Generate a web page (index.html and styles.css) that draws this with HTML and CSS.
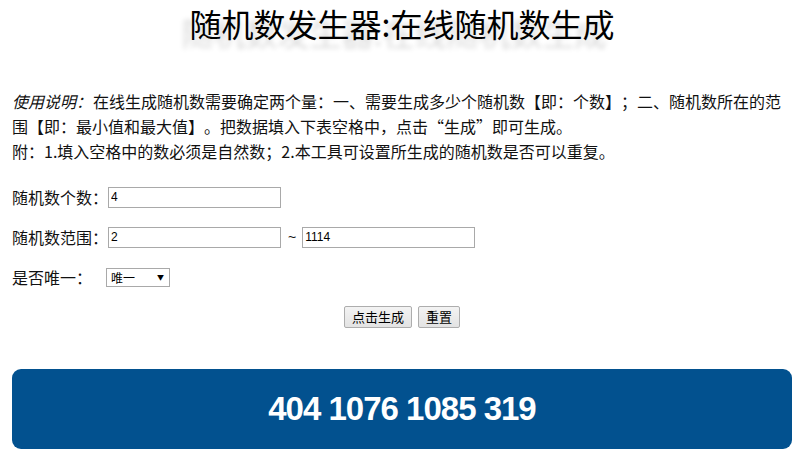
FILE: index.html
```html
<!DOCTYPE html>
<html lang="zh-CN">
<head>
<meta charset="utf-8">
<title>随机数发生器:在线随机数生成</title>
<link rel="stylesheet" href="styles.css">
</head>
<body>
<div class="page">
  <h1 class="title">随机数发生器:在线随机数生成</h1>
  <p class="intro"><em>使用说明：</em>在线生成随机数需要确定两个量：一、需要生成多少个随机数【即：个数】；二、随机数所在的范围【即：最小值和最大值】。把数据填入下表空格中，点击“生成”即可生成。<br>附：1.填入空格中的数必须是自然数；2.本工具可设置所生成的随机数是否可以重复。</p>
  <div class="row"><span class="label">随机数个数：</span><input class="field" type="text" value="4"></div>
  <div class="row"><span class="label">随机数范围：</span><input class="field" type="text" value="2"><span class="tilde">~</span><input class="field" type="text" value="1114"></div>
  <div class="row"><span class="label">是否唯一：</span><span class="select-wrap"><select class="choice"><option>唯一</option><option>不唯一</option></select><span class="arrow">▼</span></span></div>
  <div class="row actions"><button class="btn">点击生成</button><button class="btn">重置</button></div>
  <div class="result">404 1076 1085 319</div>
</div>
</body>
</html>
```
FILE: styles.css
```css
html, body {
  margin: 0;
  padding: 0;
  background: #fff;
}
body {
  font-family: "Noto Sans CJK SC", "Noto Sans", sans-serif;
  font-size: 16px;
  color: #111;
  text-spacing-trim: space-all;
}
.page {
  padding: 0 16px 0 12px;
}
.title {
  margin: 0;
  font-size: 32px;
  font-weight: normal;
  line-height: 46px;
  text-align: center;
  color: #000;
  text-shadow: -8px 9px 5px rgba(0, 0, 0, 0.15);
}
.intro {
  margin: 43px 0 0 0;
  line-height: 25px;
}
.intro em {
  font-style: italic;
  padding-right: 1px;
}
.row {
  height: 40px;
  display: flex;
  align-items: center;
}
.intro + .row {
  margin-top: 13px;
}
.label {
  white-space: nowrap;
}
.field {
  box-sizing: border-box;
  width: 173px;
  height: 21px;
  margin: 0;
  padding: 1px 2px;
  border: 1px solid #a9a9a9;
  font-family: "Liberation Sans", Arial, sans-serif;
  font-size: 12px;
  color: #000;
  outline: none;
}
.tilde {
  font-family: "Liberation Sans", Arial, sans-serif;
  font-size: 14px;
  margin: 0 6px 0 7px;
}
.select-wrap {
  position: relative;
  display: inline-flex;
  margin-left: 14px;
}
.choice {
  box-sizing: border-box;
  width: 64px;
  height: 19px;
  padding: 0 0 0 4px;
  border: 1px solid #a9a9a9;
  border-radius: 0;
  background: #fff;
  font-family: "Noto Sans CJK SC", sans-serif;
  font-size: 12px;
  color: #000;
  appearance: none;
  -webkit-appearance: none;
}
.arrow {
  position: absolute;
  right: 6px;
  top: 4px;
  font-size: 7px;
  line-height: 10px;
  color: #000;
  pointer-events: none;
}
.actions {
  justify-content: center;
  gap: 6px;
}
.btn {
  box-sizing: border-box;
  height: 22px;
  padding: 0 7px;
  border: 1px solid #adadad;
  border-radius: 2px;
  background: linear-gradient(#f3f3f3, #e3e3e3);
  font-family: "Noto Sans CJK SC", sans-serif;
  font-size: 13px;
  color: #000;
  line-height: 20px;
}
.result {
  margin-top: 32px;
  height: 80px;
  border-radius: 9px;
  background: #02518f;
  color: #fff;
  font-family: "Liberation Sans", Arial, sans-serif;
  font-weight: bold;
  font-size: 33px;
  letter-spacing: -1px;
  display: flex;
  align-items: center;
  justify-content: center;
}
```
